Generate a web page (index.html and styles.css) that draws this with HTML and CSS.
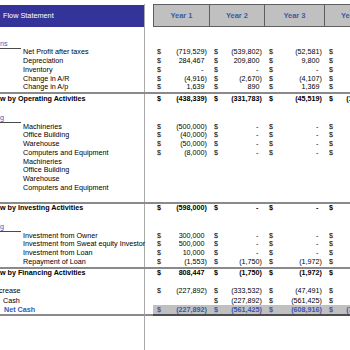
FILE: index.html
```html
<!DOCTYPE html>
<html>
<head>
<meta charset="utf-8">
<link rel="stylesheet" href="styles.css">
</head>
<body>
<div class="sheet">
  <div class="row hdr">
    <div class="lab"><div class="title">Flow Statement</div></div>
    <div class="gap"></div>
    <div class="yr first">Year 1</div>
    <div class="yr">Year 2</div>
    <div class="yr">Year 3</div>
    <div class="yr">Year 4</div>
  </div>
  <div class="row sp1"><div class="lab"></div></div>

  <div class="row head"><div class="lab"><span class="sec">ns</span></div></div>
  <div class="row"><div class="lab item">Net Profit after taxes</div><div></div>
    <div class="v"><span>$</span><span>(719,529)</span></div>
    <div class="v"><span>$</span><span>(539,802)</span></div>
    <div class="v"><span>$</span><span>(52,581)</span></div>
    <div class="v"><span>$</span><span></span></div></div>
  <div class="row"><div class="lab item">Depreciation</div><div></div>
    <div class="v"><span>$</span><span class="p">284,467</span></div>
    <div class="v"><span>$</span><span class="p">209,800</span></div>
    <div class="v"><span>$</span><span class="p">9,800</span></div>
    <div class="v"><span>$</span><span></span></div></div>
  <div class="row"><div class="lab item">Inventory</div><div></div>
    <div class="v"><span>$</span><span class="z">-</span></div>
    <div class="v"><span>$</span><span class="z">-</span></div>
    <div class="v"><span>$</span><span class="z">-</span></div>
    <div class="v"><span>$</span><span></span></div></div>
  <div class="row"><div class="lab item">Change in A/R</div><div></div>
    <div class="v"><span>$</span><span>(4,916)</span></div>
    <div class="v"><span>$</span><span>(2,670)</span></div>
    <div class="v"><span>$</span><span>(4,107)</span></div>
    <div class="v"><span>$</span><span></span></div></div>
  <div class="row"><div class="lab item">Change in A/p</div><div></div>
    <div class="v"><span>$</span><span class="p">1,639</span></div>
    <div class="v"><span>$</span><span class="p">890</span></div>
    <div class="v"><span>$</span><span class="p">1,369</span></div>
    <div class="v"><span>$</span><span></span></div></div>
  <div class="row total t-op"><div class="lab tl">w by Operating Activities</div><div></div>
    <div class="v"><span>$</span><span>(438,339)</span></div>
    <div class="v"><span>$</span><span>(331,783)</span></div>
    <div class="v"><span>$</span><span>(45,519)</span></div>
    <div class="v"><span>$</span><span>(104,215)</span></div></div>
  <div class="row sp2"><div class="lab"></div></div>

  <div class="row head"><div class="lab"><span class="sec">g</span></div></div>
  <div class="row"><div class="lab item">Machineries</div><div></div>
    <div class="v"><span>$</span><span>(500,000)</span></div>
    <div class="v"><span>$</span><span class="z">-</span></div>
    <div class="v"><span>$</span><span class="z">-</span></div>
    <div class="v"><span>$</span><span></span></div></div>
  <div class="row"><div class="lab item">Office Building</div><div></div>
    <div class="v"><span>$</span><span>(40,000)</span></div>
    <div class="v"><span>$</span><span class="z">-</span></div>
    <div class="v"><span>$</span><span class="z">-</span></div>
    <div class="v"><span>$</span><span></span></div></div>
  <div class="row"><div class="lab item">Warehouse</div><div></div>
    <div class="v"><span>$</span><span>(50,000)</span></div>
    <div class="v"><span>$</span><span class="z">-</span></div>
    <div class="v"><span>$</span><span class="z">-</span></div>
    <div class="v"><span>$</span><span></span></div></div>
  <div class="row"><div class="lab item">Computers and Equipment</div><div></div>
    <div class="v"><span>$</span><span>(8,000)</span></div>
    <div class="v"><span>$</span><span class="z">-</span></div>
    <div class="v"><span>$</span><span class="z">-</span></div>
    <div class="v"><span>$</span><span></span></div></div>
  <div class="row"><div class="lab item">Machineries</div></div>
  <div class="row"><div class="lab item">Office Building</div></div>
  <div class="row"><div class="lab item">Warehouse</div></div>
  <div class="row"><div class="lab item">Computers and Equipment</div></div>
  <div class="row sp3"><div class="lab"></div></div>
  <div class="row total t-inv"><div class="lab tl">w by Investing Activities</div><div></div>
    <div class="v"><span>$</span><span>(598,000)</span></div>
    <div class="v"><span>$</span><span class="z">-</span></div>
    <div class="v"><span>$</span><span class="z">-</span></div>
    <div class="v"><span>$</span><span></span></div></div>
  <div class="row sp4"><div class="lab"></div></div>

  <div class="row head"><div class="lab"><span class="sec">g</span></div></div>
  <div class="row"><div class="lab item">Investment from Owner</div><div></div>
    <div class="v"><span>$</span><span class="p">300,000</span></div>
    <div class="v"><span>$</span><span class="z">-</span></div>
    <div class="v"><span>$</span><span class="z">-</span></div>
    <div class="v"><span>$</span><span></span></div></div>
  <div class="row"><div class="lab item">Investment from Sweat equity Investor</div><div></div>
    <div class="v"><span>$</span><span class="p">500,000</span></div>
    <div class="v"><span>$</span><span class="z">-</span></div>
    <div class="v"><span>$</span><span class="z">-</span></div>
    <div class="v"><span>$</span><span></span></div></div>
  <div class="row"><div class="lab item">Investment from Loan</div><div></div>
    <div class="v"><span>$</span><span class="p">10,000</span></div>
    <div class="v"><span>$</span><span class="z">-</span></div>
    <div class="v"><span>$</span><span class="z">-</span></div>
    <div class="v"><span>$</span><span></span></div></div>
  <div class="row"><div class="lab item">Repayment of Loan</div><div></div>
    <div class="v"><span>$</span><span>(1,553)</span></div>
    <div class="v"><span>$</span><span>(1,750)</span></div>
    <div class="v"><span>$</span><span>(1,972)</span></div>
    <div class="v"><span>$</span><span></span></div></div>
  <div class="row total t-fin"><div class="lab tl">w by Financing Activities</div><div></div>
    <div class="v"><span>$</span><span class="p">808,447</span></div>
    <div class="v"><span>$</span><span>(1,750)</span></div>
    <div class="v"><span>$</span><span>(1,972)</span></div>
    <div class="v"><span>$</span><span></span></div></div>
  <div class="row sp2"><div class="lab"></div></div>

  <div class="row inc"><div class="lab cut">crease</div><div></div>
    <div class="v"><span>$</span><span>(227,892)</span></div>
    <div class="v"><span>$</span><span>(333,532)</span></div>
    <div class="v"><span>$</span><span>(47,491)</span></div>
    <div class="v"><span>$</span><span></span></div></div>
  <div class="row cash"><div class="lab cash-l">Cash</div><div></div>
    <div class="v"></div>
    <div class="v"><span>$</span><span>(227,892)</span></div>
    <div class="v"><span>$</span><span>(561,425)</span></div>
    <div class="v"><span>$</span><span></span></div></div>
  <div class="row net"><div class="lab net-l">Net Cash</div><div class="ng"></div>
    <div class="v"><span>$</span><span>(227,892)</span></div>
    <div class="v"><span>$</span><span>(561,425)</span></div>
    <div class="v"><span>$</span><span>(608,916)</span></div>
    <div class="v"><span>$</span><span>(713,131)</span></div></div>
  <div class="row fill"><div class="lab"></div></div>
</div>
</body>
</html>
```

FILE: styles.css
```css
html, body {
  margin: 0;
  padding: 0;
  background: #ffffff;
}
body {
  width: 350px;
  height: 350px;
  overflow: hidden;
  font-family: "Liberation Sans", Arial, sans-serif;
  font-size: 7.2px;
  color: #000000;
}
.sheet {
  display: flex;
  flex-direction: column;
  height: 350px;
  width: 350px;
  overflow: hidden;
}
.row {
  display: grid;
  grid-template-columns: 145px 8px 57px 55px 60px 55px;
  width: 380px;
  height: 8.75px;
  line-height: 8.75px;
  white-space: nowrap;
  flex: none;
  box-sizing: border-box;
}
.lab {
  border-right: 1px solid #a9a9a9;
  height: 100%;
  box-sizing: border-box;
}
.item {
  padding-left: 23px;
}
.hdr {
  height: 27px;
  padding-top: 4px;
  line-height: normal;
}
.hdr .lab {
  padding-top: 1px;
}
.title {
  width: 144px;
  height: 22px;
  background: #333399;
  color: #ffffff;
  line-height: 22px;
  padding-left: 3px;
  box-sizing: border-box;
  font-size: 7.3px;
}
.yr {
  background: #c0c0c0;
  border-top: 1px solid #5f5f5f;
  border-bottom: 1px solid #5f5f5f;
  border-right: 1px solid #5f5f5f;
  color: #3a5ba8;
  font-weight: bold;
  font-size: 7.5px;
  text-align: center;
  line-height: 21px;
  height: 23px;
  box-sizing: border-box;
}
.yr.first {
  border-left: 1px solid #5f5f5f;
}
.sp1 { height: 12.5px; }
.sp2 { height: 10.2px; }
.sp3 { height: 9.2px; }
.sp4 { height: 10.7px; }
.head {
  height: 8.8px;
}
.sec {
  display: inline-block;
  width: 21px;
  height: 100%;
  box-sizing: border-box;
  border-bottom: 1px solid #4a4a4a;
  color: #3b63c4;
  vertical-align: top;
}
.total {
  border-top: 2px solid #8a8a8a;
  font-weight: bold;
}
.t-op { height: 11.5px; line-height: 9.5px; }
.t-inv { height: 10.3px; line-height: 8.3px; }
.t-fin { height: 10.5px; line-height: 8.5px; }
.tl {
  padding-left: 0;
}
.v {
  display: flex;
  justify-content: space-between;
  padding-left: 4px;
  padding-right: 3px;
}
.p { padding-right: 2.4px; }
.z { padding-right: 3.5px; }
.inc { height: 8.8px; }
.cut { margin-left: -1px; }
.cash { height: 9.5px; line-height: 9.5px; }
.cash-l { padding-left: 3px; }
.net {
  height: 11px;
  line-height: 9px;
  font-weight: bold;
  color: #3557b5;
}
.net .lab, .net .ng {
  border-bottom: 2px solid #8a8a8a;
}
.net .v {
  background: #c0c0c0;
  border-bottom: 2px solid #4d4d4d;
}
.net-l {
  padding-left: 4px;
}
.fill {
  flex: 1 1 auto;
  height: auto;
}
```
